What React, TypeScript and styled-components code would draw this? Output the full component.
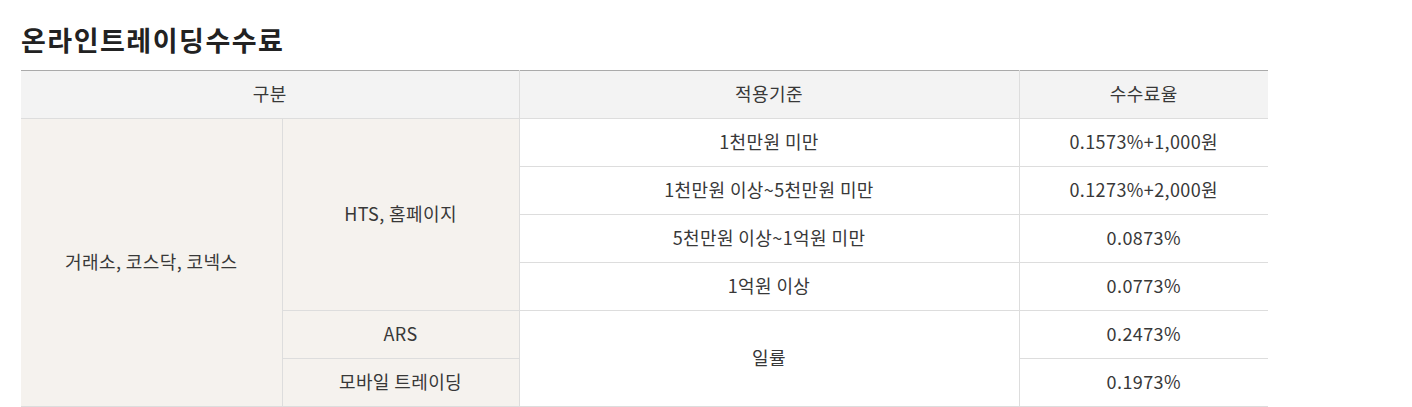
import React from "react";
import styled, { createGlobalStyle } from "styled-components";

const Global = createGlobalStyle`
  html, body { margin: 0; padding: 0; background: #fff; }
  body { font-family: "Noto Sans CJK KR", "Noto Sans", sans-serif; color: #333; }
`;

const Page = styled.div`
  padding: 22px 0 0 21px;
`;

const Title = styled.h2`
  margin: 0 0 12px;
  font-size: 27px;
  line-height: 36px;
  font-weight: 700;
  color: #222;
  letter-spacing: 1.5px;
`;

const Table = styled.table`
  width: 1247px;
  border-collapse: collapse;
  table-layout: fixed;
  border-top: 1px solid #aaa;
  font-size: 18px;
  letter-spacing: 0.4px;
  color: #383838;
`;

const Th = styled.th`
  height: 44px;
  padding: 0 0 3px;
  background: #f3f3f3;
  font-weight: 400;
  text-align: center;
  vertical-align: middle;
  border-bottom: 1px solid #ddd;
  border-left: 1px solid #ddd;
  &:first-child { border-left: none; }
`;

const Td = styled.td<{ $shade?: boolean; $first?: boolean }>`
  height: 44px;
  padding: 0 0 3px;
  text-align: center;
  vertical-align: middle;
  background: ${(p) => (p.$shade ? "#f5f2ee" : "#fff")};
  border-bottom: 1px solid #ddd;
  border-left: ${(p) => (p.$first ? "none" : "1px solid #ddd")};
`;

const rows: { basis: string; rate: string }[] = [
  { basis: "1천만원 미만", rate: "0.1573%+1,000원" },
  { basis: "1천만원 이상~5천만원 미만", rate: "0.1273%+2,000원" },
  { basis: "5천만원 이상~1억원 미만", rate: "0.0873%" },
  { basis: "1억원 이상", rate: "0.0773%" },
];

export default function App() {
  return (
    <Page>
      <Global />
      <Title>온라인트레이딩수수료</Title>
      <Table>
        <colgroup>
          <col style={{ width: 261 }} />
          <col style={{ width: 237 }} />
          <col style={{ width: 500 }} />
          <col style={{ width: 249 }} />
        </colgroup>
        <thead>
          <tr>
            <Th colSpan={2}>구분</Th>
            <Th>적용기준</Th>
            <Th>수수료율</Th>
          </tr>
        </thead>
        <tbody>
          {rows.map((r, i) => (
            <tr key={i}>
              {i === 0 && (
                <>
                  <Td $shade $first rowSpan={6}>
                    거래소, 코스닥, 코넥스
                  </Td>
                  <Td $shade rowSpan={4}>
                    HTS, 홈페이지
                  </Td>
                </>
              )}
              <Td>{r.basis}</Td>
              <Td>{r.rate}</Td>
            </tr>
          ))}
          <tr>
            <Td $shade>ARS</Td>
            <Td rowSpan={2}>일률</Td>
            <Td>0.2473%</Td>
          </tr>
          <tr>
            <Td $shade>모바일 트레이딩</Td>
            <Td>0.1973%</Td>
          </tr>
        </tbody>
      </Table>
    </Page>
  );
}
